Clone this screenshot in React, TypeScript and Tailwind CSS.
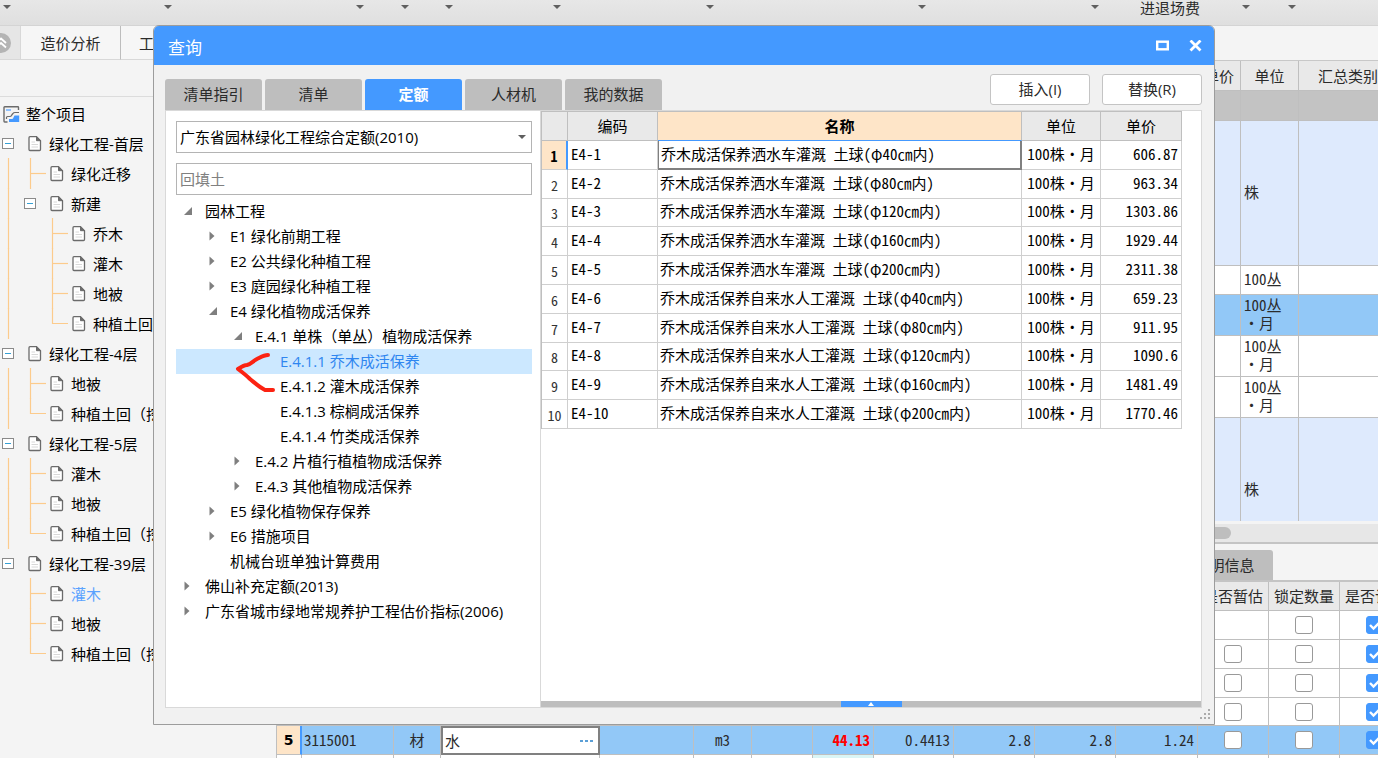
import { clsx } from "clsx";
import { useState } from "react";

type GuideKind = "empty" | "line" | "tee" | "corner" | "box";

type ProjectNode = {
  label: string;
  guides: GuideKind[];
  active?: boolean;
};

type QuotaNode = {
  label: string;
  level: number;
  state: "open" | "closed" | "leaf";
};

const PROJECT_NODES: ProjectNode[] = [
  { label: "绿化工程-首层", guides: ["box"] },
  { label: "绿化迁移", guides: ["line", "tee"] },
  { label: "新建", guides: ["line", "box"] },
  { label: "乔木", guides: ["line", "empty", "tee"] },
  { label: "灌木", guides: ["line", "empty", "tee"] },
  { label: "地被", guides: ["line", "empty", "tee"] },
  { label: "种植土回（挖", guides: ["line", "empty", "corner"] },
  { label: "绿化工程-4层", guides: ["box"] },
  { label: "地被", guides: ["line", "tee"] },
  { label: "种植土回（挖", guides: ["line", "corner"] },
  { label: "绿化工程-5层", guides: ["box"] },
  { label: "灌木", guides: ["line", "tee"] },
  { label: "地被", guides: ["line", "tee"] },
  { label: "种植土回（挖", guides: ["line", "corner"] },
  { label: "绿化工程-39层", guides: ["box"] },
  { label: "灌木", guides: ["empty", "tee"], active: true },
  { label: "地被", guides: ["empty", "tee"] },
  { label: "种植土回（挖", guides: ["empty", "corner"] },
];

const QUOTA_NODES: QuotaNode[] = [
  { label: "园林工程", level: 0, state: "open" },
  { label: "E1 绿化前期工程", level: 1, state: "closed" },
  { label: "E2 公共绿化种植工程", level: 1, state: "closed" },
  { label: "E3 庭园绿化种植工程", level: 1, state: "closed" },
  { label: "E4 绿化植物成活保养", level: 1, state: "open" },
  { label: "E.4.1 单株（单丛）植物成活保养", level: 2, state: "open" },
  { label: "E.4.1.1 乔木成活保养", level: 3, state: "leaf" },
  { label: "E.4.1.2 灌木成活保养", level: 3, state: "leaf" },
  { label: "E.4.1.3 棕榈成活保养", level: 3, state: "leaf" },
  { label: "E.4.1.4 竹类成活保养", level: 3, state: "leaf" },
  { label: "E.4.2 片植行植植物成活保养", level: 2, state: "closed" },
  { label: "E.4.3 其他植物成活保养", level: 2, state: "closed" },
  { label: "E5 绿化植物保存保养", level: 1, state: "closed" },
  { label: "E6 措施项目", level: 1, state: "closed" },
  { label: "机械台班单独计算费用", level: 1, state: "leaf" },
  { label: "佛山补充定额(2013)", level: 0, state: "closed" },
  { label: "广东省城市绿地常规养护工程估价指标(2006)", level: 0, state: "closed" },
];

const LEVEL_PADDING = ["pl-[6px]", "pl-[31px]", "pl-[56px]", "pl-[81px]"];

const QUOTA_ROWS = [
  { code: "E4-1", name: "乔木成活保养洒水车灌溉 土球(φ40㎝内)", price: "606.87" },
  { code: "E4-2", name: "乔木成活保养洒水车灌溉 土球(φ80㎝内)", price: "963.34" },
  { code: "E4-3", name: "乔木成活保养洒水车灌溉 土球(φ120㎝内)", price: "1303.86" },
  { code: "E4-4", name: "乔木成活保养洒水车灌溉 土球(φ160㎝内)", price: "1929.44" },
  { code: "E4-5", name: "乔木成活保养洒水车灌溉 土球(φ200㎝内)", price: "2311.38" },
  { code: "E4-6", name: "乔木成活保养自来水人工灌溉 土球(φ40㎝内)", price: "659.23" },
  { code: "E4-7", name: "乔木成活保养自来水人工灌溉 土球(φ80㎝内)", price: "911.95" },
  { code: "E4-8", name: "乔木成活保养自来水人工灌溉 土球(φ120㎝内)", price: "1090.6" },
  { code: "E4-9", name: "乔木成活保养自来水人工灌溉 土球(φ160㎝内)", price: "1481.49" },
  { code: "E4-10", name: "乔木成活保养自来水人工灌溉 土球(φ200㎝内)", price: "1770.46" },
];

const TABS = ["清单指引", "清单", "定额", "人材机", "我的数据"];

const TOOLBAR_MARGINS = [
  "ml-[3px]",
  "ml-[154px]",
  "ml-[185px]",
  "ml-[38px]",
  "ml-[37px]",
  "ml-[101px]",
  "ml-[146px]",
  "ml-[205px]",
  "ml-[166px]",
];

// half-width Latin so that digits line up in the grids
const MONO = "font-['Noto_Sans_CJK_SC',sans-serif] [font-feature-settings:'hwid']";

function DropArrow() {
  return (
    <svg width="8" height="4" viewBox="0 0 8 4" aria-hidden>
      <path d="M0 0H8L4 4Z" fill="#5f5f5f" />
    </svg>
  );
}

function DocIcon() {
  return (
    <svg width="14" height="16" viewBox="0 0 14 16" className="shrink-0" aria-hidden>
      <path
        d="M2 .7H8.500L12.500 4.700V13.500Q12.500 14.500 11.500 14.500H2Q1 14.500 1 13.500V1.700Q1 .7 2 .7Z"
        fill="#fff"
        stroke="#6b6b6b"
        strokeWidth="1.3"
      />
      <path d="M8.500 .7L12.500 4.700H8.500Z" fill="#6b6b6b" stroke="#6b6b6b" />
      <path d="M3.500 6H7M3.500 8.500H10M3.500 11H10" stroke="#d8d8d8" />
    </svg>
  );
}

function ProjectIcon() {
  return (
    <svg width="17" height="17" viewBox="0 0 17 17" className="shrink-0" aria-hidden>
      <path
        d="M15.500 4V1.500Q15.500 .8 14.800 .8H1.700Q1 .8 1 1.500V15.300Q1 16 1.700 16H4.500"
        fill="none"
        stroke="#6b6b6b"
        strokeWidth="1.4"
      />
      <path d="M3 3H8V5H3Z" fill="#8fc2ff" />
      <path d="M3.500 13V11.500Q3.500 10.500 4.500 10.500H7Q8 10.500 8.500 9.500T10 7.500Q10.500 6.500 12 6.500H16" fill="none" stroke="#6b6b6b" strokeWidth="1.2" />
      <path d="M6 16V13H9Q10 13 10.300 12T11.500 9.500H16.200V16Z" fill="#4499ff" />
    </svg>
  );
}

function Guide({ kind }: { kind: GuideKind }) {
  return (
    <svg width="22" height="30" viewBox="0 0 22 30" className="shrink-0 overflow-visible" aria-hidden>
      {kind === "box" ? (
        <>
          <rect x="2.500" y="9.500" width="11" height="10" fill="#fff" stroke="#8a8a8a" />
          <path d="M5 14.500H11" stroke="#35a0d4" />
        </>
      ) : null}
      {kind === "line" || kind === "tee" ? (
        <path d="M8.500 -1V30" stroke="#fccb8c" strokeWidth="1.2" />
      ) : null}
      {kind === "tee" ? <path d="M8 14.500H24" stroke="#fccb8c" strokeWidth="1.2" /> : null}
      {kind === "corner" ? (
        <path d="M8.500 -1V14.500H24" fill="none" stroke="#fccb8c" strokeWidth="1.2" />
      ) : null}
    </svg>
  );
}

function TreeArrow({ state }: { state: QuotaNode["state"] }) {
  return (
    <svg width="11" height="11" viewBox="0 0 11 11" className="shrink-0" aria-hidden>
      {state === "open" ? <path d="M10 2V10H2Z" fill="#7f7f7f" /> : null}
      {state === "closed" ? <path d="M2.500 1.500L7.500 6L2.500 10.500Z" fill="#7f7f7f" /> : null}
    </svg>
  );
}

function CheckBox({ label, defaultChecked = false }: { label: string; defaultChecked?: boolean }) {
  return (
    <label className="mx-auto grid size-[18px]">
      <input
        type="checkbox"
        aria-label={label}
        defaultChecked={defaultChecked}
        className="peer size-[18px] appearance-none rounded-[3px] border border-[#999] bg-white [grid-area:1/1] checked:border-[#4499ff] checked:bg-[#4499ff]"
      />
      <svg
        viewBox="0 0 18 18"
        className="pointer-events-none invisible size-[18px] [grid-area:1/1] peer-checked:visible"
        aria-hidden
      >
        <path d="M4 9L7.500 12.500L14 6" fill="none" stroke="#fff" strokeWidth="2.400" />
      </svg>
    </label>
  );
}

function Toolbar() {
  return (
    <div className="flex h-[26px] shrink-0 items-start overflow-hidden border-b border-[#d4d4d4] bg-linear-to-b from-[#e7e7e7] to-[#dfdfdf]">
      {TOOLBAR_MARGINS.map((margin) => (
        <button key={margin} type="button" aria-label="展开" className={clsx("w-[7px] shrink-0 pt-[5px]", margin)}>
          <DropArrow />
        </button>
      ))}
      <button type="button" className="ml-[42px] h-4 shrink-0 leading-4">
        进退场费
      </button>
      <button type="button" aria-label="展开" className="ml-[42px] shrink-0 pt-[5px]">
        <DropArrow />
      </button>
      <button type="button" aria-label="展开" className="ml-[38px] shrink-0 pt-[5px]">
        <DropArrow />
      </button>
    </div>
  );
}

function PageTabs() {
  return (
    <div className="flex h-[34px] shrink-0">
      <button
        type="button"
        aria-label="收起"
        className="w-[21px] shrink-0 overflow-hidden border-r border-b border-[#d8d8d8] bg-[#e6e6e6]"
      >
        <svg width="20" height="20" viewBox="9 0 20 20" aria-hidden>
          <circle cx="10" cy="10" r="10" fill="#b4b4b4" />
          <path d="M5 10L10 5.500L15 10M5 14.500L10 10L15 14.500" fill="none" stroke="#fff" strokeWidth="1.800" />
        </svg>
      </button>
      <button type="button" className="w-[100px] shrink-0 border-r border-b border-r-[#bdbdbd] border-b-[#d8d8d8] bg-[#f6f6f6]">
        造价分析
      </button>
      <button type="button" className="w-24 shrink-0 border-r border-b border-r-[#bdbdbd] border-b-[#d8d8d8] bg-[#f6f6f6] pl-[18px] text-left">
        工
      </button>
    </div>
  );
}

function ProjectTree() {
  return (
    <nav className="w-[276px] shrink-0 overflow-hidden">
      <div className="h-[37px] border-b border-[#dcdcdc]" />
      <ul className="mt-[2px] text-black">
        <li className="flex h-[30px] items-center gap-[6px] pl-[3px]">
          <ProjectIcon />
          整个项目
        </li>
        {PROJECT_NODES.map((node, index) => (
          <li key={index} className="flex h-[30px] items-center whitespace-nowrap">
            {node.guides.map((kind, i) => (
              <Guide key={i} kind={kind} />
            ))}
            <span className="flex items-center gap-[7px] pl-[6px]">
              <DocIcon />
              <span className={clsx(node.active && "text-[#5aa2ff]")}>{node.label}</span>
            </span>
          </li>
        ))}
      </ul>
    </nav>
  );
}

const UPPER_ROWS = [
  { unit: "", row: "h-[30px] bg-[#c3c3c3]" },
  { unit: "株", row: "h-[145px] bg-[#deeafd]" },
  { unit: "100丛", row: "h-[29px] bg-white" },
  { unit: "100丛\n・月", row: "h-[41px] bg-[#92c8f7]" },
  { unit: "100丛\n・月", row: "h-[41px] bg-white" },
  { unit: "100丛\n・月", row: "h-[41px] bg-white" },
  { unit: "株", row: "h-[145px] bg-[#deeafd]" },
];

function BillTable() {
  const cell = "border-r border-b border-[#bfbfbf] p-0";
  return (
    <div className="h-[461px] shrink-0 overflow-hidden border-t border-[#c8c8c8]">
      <table className="w-[1122px] table-fixed border-separate border-spacing-0">
        <thead>
          <tr className="h-[30px] bg-[#e9e9e9]">
            <th className={clsx(cell, "w-[922px]")} />
            <th className={clsx(cell, "w-[43px] font-normal")}>单价</th>
            <th className={clsx(cell, "w-[58px] font-normal")}>单位</th>
            <th className={clsx(cell, "w-[99px] font-normal")}>汇总类别</th>
          </tr>
        </thead>
        <tbody>
          {UPPER_ROWS.map(({ unit, row }, index) => (
            <tr key={index} className={row}>
              <td className={cell} />
              <td className={cell} />
              <td className={cell}>
                <div className={clsx(MONO, "pb-[2px] pl-[3px] leading-[18px] whitespace-pre")}>{unit}</div>
              </td>
              <td className={cell} />
            </tr>
          ))}
        </tbody>
      </table>
    </div>
  );
}

const RESOURCE_COLUMNS = [
  { title: "", width: "w-[25px]" },
  { title: "", width: "w-[92px]" },
  { title: "", width: "w-[47px]" },
  { title: "", width: "w-[159px]" },
  { title: "", width: "w-[94px]" },
  { title: "", width: "w-[58px]" },
  { title: "", width: "w-[61px]" },
  { title: "", width: "w-[61px]" },
  { title: "", width: "w-[80px]" },
  { title: "", width: "w-[81px]" },
  { title: "", width: "w-[81px]" },
  { title: "", width: "w-[82px]" },
  { title: "是否暂估", width: "w-[71px]" },
  { title: "锁定数量", width: "w-[71px]" },
  { title: "是否计价", width: "w-[71px]" },
];

function ResourceTable() {
  const cell = "border-r border-b border-[#bfbfbf] p-0";
  return (
    <table className="w-[1134px] shrink-0 table-fixed border-separate border-spacing-0 border-l border-[#bfbfbf] bg-white">
      <thead>
        <tr className="h-[29px] bg-[#e9e9e9]">
          {RESOURCE_COLUMNS.map(({ title, width }, index) => (
            <th key={index} className={clsx(cell, width, "font-normal whitespace-nowrap")}>
              {title}
            </th>
          ))}
        </tr>
      </thead>
      <tbody>
        {[1, 2, 3, 4].map((row) => (
          <tr key={row} className={row === 4 ? "h-[28px]" : "h-[29px]"}>
            {RESOURCE_COLUMNS.slice(0, 12).map((_, index) => (
              <td key={index} className={cell} />
            ))}
            <td className={cell}>{row > 1 ? <CheckBox label="是否暂估" /> : null}</td>
            <td className={cell}>
              <CheckBox label="锁定数量" />
            </td>
            <td className={cell}>
              <CheckBox label="是否计价" defaultChecked />
            </td>
          </tr>
        ))}
        <tr className={clsx("h-[29px] bg-[#92c8f7]", MONO)}>
          <th className={clsx(cell, "border-r-2 border-r-[#4499ff] bg-[#fee5c8] font-['DejaVu_Sans',sans-serif] text-[14px] text-black")}>
            5
          </th>
          <td className={cell}>
            <span className="pl-[2px]">3115001</span>
          </td>
          <td className={clsx(cell, "text-center")}>材</td>
          <td className="border-2 border-[#808080] bg-white p-0">
            <div className="flex items-center pr-1 pl-[2px]">
              <input
                type="text"
                aria-label="名称"
                defaultValue="水"
                className="h-[22px] w-full min-w-0 flex-1 bg-transparent outline-none"
              />
              <button type="button" aria-label="选择">
                <svg width="14" height="4" viewBox="0 0 14 4" aria-hidden>
                  <path d="M0 1H3V3H0ZM5 1H8V3H5ZM10 1H13V3H10Z" fill="#5b9fd6" />
                </svg>
              </button>
            </div>
          </td>
          <td className={cell} />
          <td className={clsx(cell, "text-center")}>m3</td>
          <td className={cell} />
          <td className={clsx(cell, "pr-[3px] text-right font-bold text-[#f00]")}>44.13</td>
          <td className={clsx(cell, "pr-[3px] text-right")}>0.4413</td>
          <td className={clsx(cell, "pr-[3px] text-right")}>2.8</td>
          <td className={clsx(cell, "pr-[3px] text-right")}>2.8</td>
          <td className={clsx(cell, "pr-[3px] text-right")}>1.24</td>
          <td className={cell}>
            <CheckBox label="是否暂估" />
          </td>
          <td className={cell}>
            <CheckBox label="锁定数量" />
          </td>
          <td className={cell}>
            <CheckBox label="是否计价" defaultChecked />
          </td>
        </tr>
        <tr className="h-[29px]">
          {RESOURCE_COLUMNS.map((_, index) => (
            <td key={index} className={clsx(cell, index === 7 && "bg-[#d9f5f5]")} />
          ))}
        </tr>
      </tbody>
    </table>
  );
}

function QuotaTree({ active, onSelect }: { active: string; onSelect: (label: string) => void }) {
  return (
    <div className="relative mt-1">
      <ul>
        {QUOTA_NODES.map(({ label, level, state }) => (
          <li key={label}>
            <button
              type="button"
              onClick={() => onSelect(label)}
              className={clsx(
                "flex h-[25px] w-full items-center gap-[12px] pb-[2px] text-left whitespace-nowrap",
                LEVEL_PADDING[level],
                active === label ? "bg-[#cce8ff] text-[#2f86f0]" : "text-black",
              )}
            >
              <TreeArrow state={state} />
              {label}
            </button>
          </li>
        ))}
      </ul>
      {/* hand-drawn bracket joining the first two leaves */}
      <svg
        width="42"
        height="44"
        viewBox="0 0 42 44"
        className="pointer-events-none absolute top-[151px] left-[58px]"
        aria-hidden
      >
        <path
          d="M34 5C30 5 27 7 23 9C19 11 17 14 13 15C10 15 7 17 4 19C8 22 12 25 16 29C21 33 25 37 31 40L39 40"
          fill="none"
          stroke="#fb2212"
          strokeWidth="4"
          strokeLinecap="round"
          strokeLinejoin="round"
        />
      </svg>
    </div>
  );
}

function QuotaTable() {
  const cell = "border-r border-b border-[#cfcfcf] px-0 pt-0 pb-[2px]";
  const head = "border-r border-b border-[#bfbfbf] p-0";
  return (
    <table className="h-[318px] w-[641px] shrink-0 table-fixed border-separate border-spacing-0 border-t border-l border-[#bfbfbf] text-black">
      <thead>
        <tr className="h-[29px] bg-[#e9e9e9]">
          <th className={clsx(head, "w-[26px]")} />
          <th className={clsx(head, "w-[90px] font-normal")}>编码</th>
          <th className={clsx(head, "w-[364px] border-b-[#4499ff] bg-[#fee5c8] font-bold")}>名称</th>
          <th className={clsx(head, "w-[79px] font-normal")}>单位</th>
          <th className={clsx(head, "w-[81px] font-normal")}>单价</th>
        </tr>
      </thead>
      <tbody>
        {QUOTA_ROWS.map(({ code, name, price }, index) => (
          <tr key={code} className={MONO}>
            <th
              className={clsx(
                "border-r border-b border-[#cfcfcf] px-0 pt-[2px] pb-0 text-[14px]",
                index === 0 ? "border-r-2 border-r-[#4499ff] bg-[#fee5c8] font-bold" : "font-normal text-[#333]",
              )}
            >
              {index + 1}
            </th>
            <td className={cell}>
              <span className="pl-[3px]">{code}</span>
            </td>
            <td
              className={clsx(
                "px-0 pt-0 whitespace-nowrap",
                index === 0
                  ? "border-r-2 border-b-2 border-l border-[#808080] pb-px"
                  : "border-r border-b border-[#cfcfcf] pb-[2px]",
              )}
            >
              <span className="pl-[2px]">{name}</span>
            </td>
            <td className={clsx(cell, "text-center whitespace-nowrap")}>100株・月</td>
            <td className={clsx(cell, "pr-[3px] text-right")}>{price}</td>
          </tr>
        ))}
      </tbody>
    </table>
  );
}

function QueryDialog() {
  const [tab, setTab] = useState("定额");
  const [active, setActive] = useState("E.4.1.1 乔木成活保养");

  return (
    <section
      role="dialog"
      aria-labelledby="query-title"
      className="absolute top-[25px] right-[163px] bottom-[33px] left-[153px] flex flex-col overflow-hidden rounded-t-md border border-[#9c9c9c] bg-[#f1f1f1]"
    >
      <header className="flex h-[39px] shrink-0 items-center justify-between bg-[#4499ff] pr-[12px] pl-[14px] text-white">
        <h1 id="query-title" className="pt-1 text-[17px]">查询</h1>
        <div className="flex gap-[20px]">
          <button type="button" aria-label="最大化">
            <svg width="13" height="12" viewBox="0 0 13 12" aria-hidden>
              <rect x="1.200" y="1.700" width="10.600" height="7.600" fill="none" stroke="#fff" strokeWidth="2.400" />
            </svg>
          </button>
          <button type="button" aria-label="关闭">
            <svg width="13" height="12" viewBox="0 0 13 12" aria-hidden>
              <path d="M1.500 .5L11.500 10.500M11.500 .5L1.500 10.500" stroke="#fff" strokeWidth="2.800" />
            </svg>
          </button>
        </div>
      </header>

      <div className="flex h-[45px] shrink-0 justify-between pr-[12px] pl-[11px]">
        <div role="tablist" className="flex items-end gap-[3px]">
          {TABS.map((item) => (
            <button
              key={item}
              type="button"
              role="tab"
              aria-selected={tab === item}
              onClick={() => setTab(item)}
              className={clsx(
                "h-[31px] w-[97px] rounded-t-[3px] pb-[2px]",
                tab === item ? "bg-[#4499ff] font-bold text-white" : "bg-[#bebebe]",
              )}
            >
              {item}
            </button>
          ))}
        </div>
        <div className="flex gap-3 pt-[9px]">
          <button type="button" className="h-[31px] w-[100px] rounded-[3px] border border-[#c4c4c4] bg-white pb-px">
            插入(I)
          </button>
          <button type="button" className="h-[31px] w-[100px] rounded-[3px] border border-[#c4c4c4] bg-white pb-px">
            替换(R)
          </button>
        </div>
      </div>

      <div className="mr-[12px] mb-[16px] ml-[11px] flex min-h-0 flex-1 border border-[#d9d9d9] bg-white">
        <div className="w-[375px] shrink-0 overflow-hidden border-r border-[#d9d9d9] pt-[10px] pr-[8px] pl-[10px]">
          <div className="grid items-center">
            <select
              aria-label="定额库"
              className="h-8 w-full appearance-none border border-[#b4b4b4] bg-white px-[3px] text-black [grid-area:1/1]"
            >
              <option>广东省园林绿化工程综合定额(2010)</option>
            </select>
            <span className="pointer-events-none justify-self-end pr-[6px] [grid-area:1/1]">
              <DropArrow />
            </span>
          </div>
          <input
            type="search"
            aria-label="搜索"
            placeholder="回填土"
            className="mt-[10px] block h-8 w-full border border-[#b4b4b4] bg-white px-[3px] outline-none placeholder:text-[#808080]"
          />
          <QuotaTree active={active} onSelect={setActive} />
        </div>
        <div className="flex min-w-0 flex-1 flex-col overflow-hidden">
          <div className="min-h-0 flex-1 overflow-hidden">
            <QuotaTable />
          </div>
          <div className="flex h-[6px] shrink-0 justify-center bg-[#bebebe]">
            <button type="button" aria-label="展开详情" className="flex w-[61px] items-center justify-center bg-[#4499ff]">
              <svg width="6" height="4" viewBox="0 0 6 4" aria-hidden>
                <path d="M3 0L6 4H0Z" fill="#fff" />
              </svg>
            </button>
          </div>
        </div>
      </div>

      <svg width="11" height="11" viewBox="0 0 11 11" className="absolute right-[3px] bottom-[4px]" aria-hidden>
        <path
          d="M8 0H10V2H8ZM4 4H6V6H4ZM8 4H10V6H8ZM0 8H2V10H0ZM4 8H6V10H4ZM8 8H10V10H8Z"
          fill="#ababab"
        />
      </svg>
    </section>
  );
}

export default function App() {
  return (
    <div className="relative flex h-screen flex-col overflow-hidden bg-[#f4f4f4] font-['Open_Sans','Noto_Sans_CJK_SC',sans-serif] text-[15px] leading-5 text-[#2b2b2b]">
      <Toolbar />
      <PageTabs />
      <div className="flex min-h-0 flex-1">
        <ProjectTree />
        <main className="flex min-w-0 flex-1 flex-col overflow-hidden">
          <BillTable />
          <div className="mt-[3px] flex h-[20px] shrink-0 items-center border-b-2 border-[#c4c4c4] bg-[#e7e7e7]">
            <div className="h-3 w-[955px] rounded-full bg-[#bebebe]" />
          </div>
          <div className="flex h-[38px] shrink-0 items-end border-b-2 border-[#c4c4c4] pl-[900px]">
            <button type="button" className="h-[30px] w-[97px] shrink-0 rounded-t-[3px] bg-[#bebebe]">
              说明信息
            </button>
          </div>
          <ResourceTable />
        </main>
      </div>
      <QueryDialog />
    </div>
  );
}
